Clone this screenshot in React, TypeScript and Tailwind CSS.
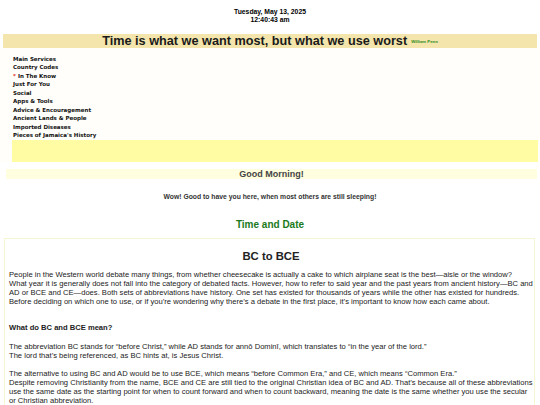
export default function App() {
  const menu = [
    "Main Services",
    "Country Codes",
    "In The Know",
    "Just For You",
    "Social",
    "Apps & Tools",
    "Advice & Encouragement",
    "Ancient Lands & People",
    "Imported Diseases",
    "Pieces of Jamaica's History",
  ];
  return (
    <div className="w-[540px] h-[405px] overflow-hidden bg-white text-[#222]" style={{ fontFamily: '"Liberation Sans", Arial, sans-serif' }}>
      <div className="pt-[8px] h-[34px] text-center text-[6.8px] leading-[7.5px] font-bold text-[#000]">
        <div>Tuesday, May 13, 2025</div>
        <div>12:40:43 am</div>
      </div>
      <div className="mx-[3px] h-[14px] bg-[#f3e5ab] flex items-center justify-center">
        <span className="text-[12.7px] font-bold leading-[14px] text-[#1a1a1a]">Time is what we want most, but what we use worst</span>
        <span className="ml-[4px] mt-[3px] text-[4.3px] font-bold text-[#2e8b1e]">William Penn</span>
      </div>
      <div className="pt-[7px] pl-[12px] pr-[2px] bg-[#fffefa]">
        <ul className="pl-[1px]" style={{ fontFamily: '"DejaVu Sans", Verdana, sans-serif' }}>
          {menu.map((m) => (
            <li key={m} className="h-[8.45px] leading-[8.45px] text-[5.5px] font-bold text-[#111] flex items-center">
              {m === "In The Know" && <span className="text-[#e03030] mr-[2px]">*</span>}
              {m}
            </li>
          ))}
        </ul>
        <div className="mt-[0.5px] h-[22px] bg-[#fffca3]" />
      </div>
      <div className="mt-[7px] ml-[6px] mr-[3px] h-[10px] bg-[#ffffdf] flex items-center justify-center">
        <span className="text-[9px] font-bold text-[#444] leading-[10px]">Good Morning!</span>
      </div>
      <div className="mt-[14px] text-center text-[6.8px] font-bold text-[#333] leading-[8px]">
        Wow! Good to have you here, when most others are still sleeping!
      </div>
      <div className="mt-[17px] text-center text-[10px] font-bold text-[#1c7a1c] leading-[13px]">Time and Date</div>
      <div className="mt-[7px] ml-[4px] mr-[5px] border-[1.5px] border-[#f6f6d2] pl-[4px] pr-[1px] pt-[10px] pb-[20px]">
        <h2 className="text-center text-[11.3px] font-bold leading-[14px] text-[#222]">BC to BCE</h2>
        <div className="mt-[7px] text-[7.6px] leading-[9px] text-[#222]">
          <p>
            People in the Western world debate many things, from whether cheesecake is actually a cake to which airplane seat is the best—aisle or the window?
            <br />
            What year it is generally does not fall into the category of debated facts. However, how to refer to said year and the past years from ancient history—BC and AD or BCE and CE—does. Both sets of abbreviations have history. One set has existed for thousands of years while the other has existed for hundreds. Before deciding on which one to use, or if you’re wondering why there’s a debate in the first place, it’s important to know how each came about.
          </p>
          <p className="mt-[17px] font-bold">What do BC and BCE mean?</p>
          <p className="mt-[10px]">
            The abbreviation BC stands for “before Christ,” while AD stands for annō Dominī, which translates to “in the year of the lord.”
            <br />
            The lord that’s being referenced, as BC hints at, is Jesus Christ.
          </p>
          <p className="mt-[9px]">
            The alternative to using BC and AD would be to use BCE, which means “before Common Era,” and CE, which means “Common Era.”
            <br />
            Despite removing Christianity from the name, BCE and CE are still tied to the original Christian idea of BC and AD. That’s because all of these abbreviations use the same date as the starting point for when to count forward and when to count backward, meaning the date is the same whether you use the secular or Christian abbreviation.
          </p>
        </div>
      </div>
    </div>
  );
}
